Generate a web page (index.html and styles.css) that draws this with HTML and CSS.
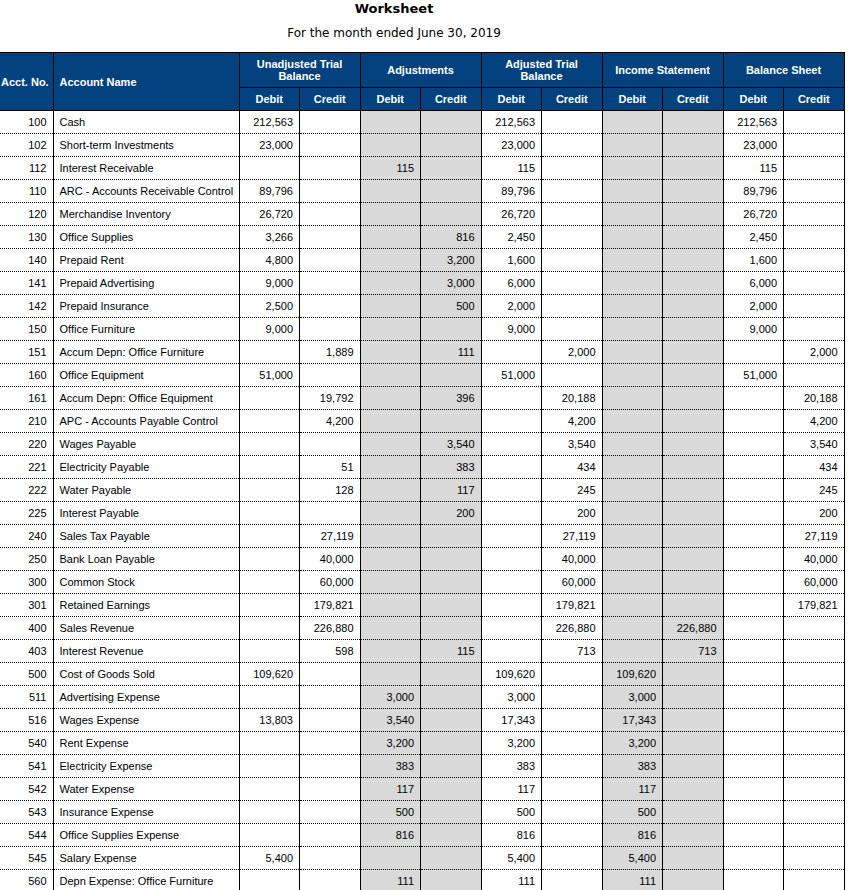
FILE: index.html
```html
<!DOCTYPE html>
<html>
<head>
<meta charset="utf-8">
<link rel="stylesheet" href="styles.css">
</head>
<body>
<div class="titles">
  <div class="title">Worksheet</div>
  <div class="subtitle">For the month ended June 30, 2019</div>
</div>
<table class="ws">
  <colgroup>
    <col class="c-no"><col class="c-name">
    <col class="c-n"><col class="c-n">
    <col class="c-n grey"><col class="c-n grey">
    <col class="c-n"><col class="c-n">
    <col class="c-n grey"><col class="c-n grey">
    <col class="c-n"><col class="c-n">
  </colgroup>
  <thead>
    <tr class="h1">
      <th rowspan="2" class="h-no">Acct. No.</th>
      <th rowspan="2" class="h-name">Account Name</th>
      <th colspan="2">Unadjusted Trial<br>Balance</th>
      <th colspan="2">Adjustments</th>
      <th colspan="2">Adjusted Trial<br>Balance</th>
      <th colspan="2">Income Statement</th>
      <th colspan="2">Balance Sheet</th>
    </tr>
    <tr class="h2">
      <th>Debit</th><th>Credit</th>
      <th>Debit</th><th>Credit</th>
      <th>Debit</th><th>Credit</th>
      <th>Debit</th><th>Credit</th>
      <th>Debit</th><th>Credit</th>
    </tr>
  </thead>
  <tbody>
    <tr><td>100</td><td>Cash</td><td>212,563</td><td></td><td></td><td></td><td>212,563</td><td></td><td></td><td></td><td>212,563</td><td></td></tr>
    <tr><td>102</td><td>Short-term Investments</td><td>23,000</td><td></td><td></td><td></td><td>23,000</td><td></td><td></td><td></td><td>23,000</td><td></td></tr>
    <tr><td>112</td><td>Interest Receivable</td><td></td><td></td><td>115</td><td></td><td>115</td><td></td><td></td><td></td><td>115</td><td></td></tr>
    <tr><td>110</td><td>ARC - Accounts Receivable Control</td><td>89,796</td><td></td><td></td><td></td><td>89,796</td><td></td><td></td><td></td><td>89,796</td><td></td></tr>
    <tr><td>120</td><td>Merchandise Inventory</td><td>26,720</td><td></td><td></td><td></td><td>26,720</td><td></td><td></td><td></td><td>26,720</td><td></td></tr>
    <tr><td>130</td><td>Office Supplies</td><td>3,266</td><td></td><td></td><td>816</td><td>2,450</td><td></td><td></td><td></td><td>2,450</td><td></td></tr>
    <tr><td>140</td><td>Prepaid Rent</td><td>4,800</td><td></td><td></td><td>3,200</td><td>1,600</td><td></td><td></td><td></td><td>1,600</td><td></td></tr>
    <tr><td>141</td><td>Prepaid Advertising</td><td>9,000</td><td></td><td></td><td>3,000</td><td>6,000</td><td></td><td></td><td></td><td>6,000</td><td></td></tr>
    <tr><td>142</td><td>Prepaid Insurance</td><td>2,500</td><td></td><td></td><td>500</td><td>2,000</td><td></td><td></td><td></td><td>2,000</td><td></td></tr>
    <tr><td>150</td><td>Office Furniture</td><td>9,000</td><td></td><td></td><td></td><td>9,000</td><td></td><td></td><td></td><td>9,000</td><td></td></tr>
    <tr><td>151</td><td>Accum Depn: Office Furniture</td><td></td><td>1,889</td><td></td><td>111</td><td></td><td>2,000</td><td></td><td></td><td></td><td>2,000</td></tr>
    <tr><td>160</td><td>Office Equipment</td><td>51,000</td><td></td><td></td><td></td><td>51,000</td><td></td><td></td><td></td><td>51,000</td><td></td></tr>
    <tr><td>161</td><td>Accum Depn: Office Equipment</td><td></td><td>19,792</td><td></td><td>396</td><td></td><td>20,188</td><td></td><td></td><td></td><td>20,188</td></tr>
    <tr><td>210</td><td>APC - Accounts Payable Control</td><td></td><td>4,200</td><td></td><td></td><td></td><td>4,200</td><td></td><td></td><td></td><td>4,200</td></tr>
    <tr><td>220</td><td>Wages Payable</td><td></td><td></td><td></td><td>3,540</td><td></td><td>3,540</td><td></td><td></td><td></td><td>3,540</td></tr>
    <tr><td>221</td><td>Electricity Payable</td><td></td><td>51</td><td></td><td>383</td><td></td><td>434</td><td></td><td></td><td></td><td>434</td></tr>
    <tr><td>222</td><td>Water Payable</td><td></td><td>128</td><td></td><td>117</td><td></td><td>245</td><td></td><td></td><td></td><td>245</td></tr>
    <tr><td>225</td><td>Interest Payable</td><td></td><td></td><td></td><td>200</td><td></td><td>200</td><td></td><td></td><td></td><td>200</td></tr>
    <tr><td>240</td><td>Sales Tax Payable</td><td></td><td>27,119</td><td></td><td></td><td></td><td>27,119</td><td></td><td></td><td></td><td>27,119</td></tr>
    <tr><td>250</td><td>Bank Loan Payable</td><td></td><td>40,000</td><td></td><td></td><td></td><td>40,000</td><td></td><td></td><td></td><td>40,000</td></tr>
    <tr><td>300</td><td>Common Stock</td><td></td><td>60,000</td><td></td><td></td><td></td><td>60,000</td><td></td><td></td><td></td><td>60,000</td></tr>
    <tr><td>301</td><td>Retained Earnings</td><td></td><td>179,821</td><td></td><td></td><td></td><td>179,821</td><td></td><td></td><td></td><td>179,821</td></tr>
    <tr><td>400</td><td>Sales Revenue</td><td></td><td>226,880</td><td></td><td></td><td></td><td>226,880</td><td></td><td>226,880</td><td></td><td></td></tr>
    <tr><td>403</td><td>Interest Revenue</td><td></td><td>598</td><td></td><td>115</td><td></td><td>713</td><td></td><td>713</td><td></td><td></td></tr>
    <tr><td>500</td><td>Cost of Goods Sold</td><td>109,620</td><td></td><td></td><td></td><td>109,620</td><td></td><td>109,620</td><td></td><td></td><td></td></tr>
    <tr><td>511</td><td>Advertising Expense</td><td></td><td></td><td>3,000</td><td></td><td>3,000</td><td></td><td>3,000</td><td></td><td></td><td></td></tr>
    <tr><td>516</td><td>Wages Expense</td><td>13,803</td><td></td><td>3,540</td><td></td><td>17,343</td><td></td><td>17,343</td><td></td><td></td><td></td></tr>
    <tr><td>540</td><td>Rent Expense</td><td></td><td></td><td>3,200</td><td></td><td>3,200</td><td></td><td>3,200</td><td></td><td></td><td></td></tr>
    <tr><td>541</td><td>Electricity Expense</td><td></td><td></td><td>383</td><td></td><td>383</td><td></td><td>383</td><td></td><td></td><td></td></tr>
    <tr><td>542</td><td>Water Expense</td><td></td><td></td><td>117</td><td></td><td>117</td><td></td><td>117</td><td></td><td></td><td></td></tr>
    <tr><td>543</td><td>Insurance Expense</td><td></td><td></td><td>500</td><td></td><td>500</td><td></td><td>500</td><td></td><td></td><td></td></tr>
    <tr><td>544</td><td>Office Supplies Expense</td><td></td><td></td><td>816</td><td></td><td>816</td><td></td><td>816</td><td></td><td></td><td></td></tr>
    <tr><td>545</td><td>Salary Expense</td><td>5,400</td><td></td><td></td><td></td><td>5,400</td><td></td><td>5,400</td><td></td><td></td><td></td></tr>
    <tr><td>560</td><td>Depn Expense: Office Furniture</td><td></td><td></td><td>111</td><td></td><td>111</td><td></td><td>111</td><td></td><td></td><td></td></tr>
  </tbody>
</table>
</body>
</html>
```
FILE: styles.css
```css
html, body {
  margin: 0;
  padding: 0;
  background: #fff;
}
.titles {
  width: 788px;
  text-align: center;
  font-family: "DejaVu Sans", Verdana, sans-serif;
  color: #000;
}
.title {
  font-weight: bold;
  font-size: 13px;
  line-height: 16px;
  padding-top: 1px;
}
.subtitle {
  font-size: 12px;
  line-height: 16px;
  padding-top: 8px;
}
.ws {
  margin-top: 11px;
  border-collapse: collapse;
  table-layout: fixed;
  width: 844px;
  font-family: "Liberation Sans", Arial, sans-serif;
  font-size: 11px;
  color: #000;
}
.c-no { width: 53px; }
.c-name { width: 186px; }
.c-n { width: 60.5px; }
.grey { background: #d9d9d9; }
.ws th {
  background: #03427e;
  color: #fff;
  font-weight: bold;
  font-size: 11px;
  line-height: 12px;
  border: 1px solid #000;
  padding: 0;
  text-align: center;
}
.ws th:first-child { border-left: none; }
.h1 th { height: 34px; }
.h2 th { height: 22px; }
.ws th.h-no {
  text-align: left;
  padding-left: 1px;
}
.ws th.h-name {
  text-align: left;
  padding-left: 6px;
}
.ws td {
  height: 22px;
  padding: 0 6px 0 0;
  border-left: 1px solid #000;
  border-right: 1px solid #000;
  border-bottom: 1px dotted #000;
  text-align: right;
  white-space: nowrap;
  line-height: 14px;
  vertical-align: middle;
}
.ws td:first-child {
  border-left: none;
  padding-right: 6px;
}
.ws td:nth-child(2) {
  text-align: left;
  padding: 0 0 0 6px;
}
```
